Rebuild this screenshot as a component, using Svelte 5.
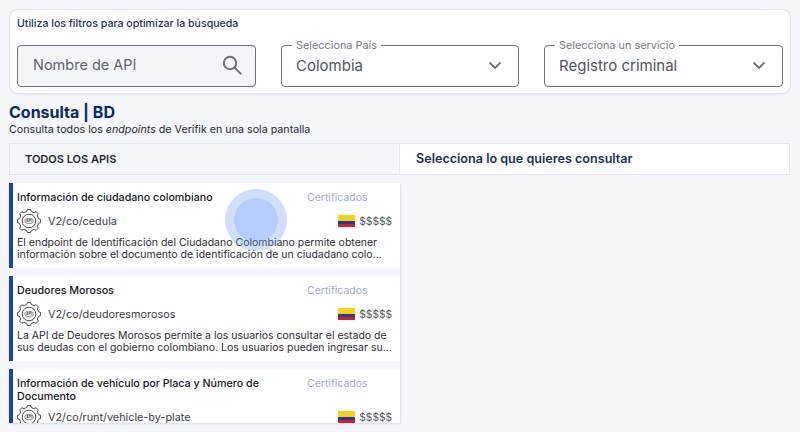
<script lang="ts">
	const apis = [
		{
			title: 'Información de ciudadano colombiano',
			path: 'V2/co/cedula',
			desc: [
				'El endpoint de Identificación del Ciudadano Colombiano permite obtener',
				'información sobre el documento de identificación de un ciudadano colo...'
			]
		},
		{
			title: 'Deudores Morosos',
			path: 'V2/co/deudoresmorosos',
			desc: [
				'La API de Deudores Morosos permite a los usuarios consultar el estado de',
				'sus deudas con el gobierno colombiano. Los usuarios pueden ingresar su...'
			]
		},
		{
			title: 'Información de vehículo por Placa y Número de Documento',
			path: 'V2/co/runt/vehicle-by-plate',
			desc: []
		}
	];

	// 8-tooth gear outline for the API badge
	function gearPath() {
		const pts: string[] = [];
		const teeth = 8;
		for (let i = 0; i < teeth; i++) {
			const a = (i / teeth) * Math.PI * 2 - Math.PI / 2;
			const step = (Math.PI * 2) / teeth;
			const corners = [
				[9.8, a - step * 0.3],
				[11.7, a - step * 0.17],
				[11.7, a + step * 0.17],
				[9.8, a + step * 0.3]
			];
			for (const [r, t] of corners) {
				pts.push((12 + r * Math.cos(t)).toFixed(2) + ' ' + (12 + r * Math.sin(t)).toFixed(2));
			}
		}
		return 'M' + pts.join('L') + 'Z';
	}
	const gear = gearPath();
</script>

<main class="page">
	<section class="filters">
		<p class="filters-title">Utiliza los filtros para optimizar la búsqueda</p>
		<div class="filters-row">
			<div class="search">
				<span>Nombre de API</span>
				<svg width="24" height="24" viewBox="0 0 24 24" fill="none" stroke="#6b6f78" stroke-width="2">
					<circle cx="10" cy="10" r="6.2" />
					<path d="M14.6 14.6 L20.6 20.6" stroke-linecap="round" />
				</svg>
			</div>
			<fieldset class="select">
				<legend>Selecciona País</legend>
				<span>Colombia</span>
				<svg class="chev" width="14" height="9" viewBox="0 0 14 9" fill="none" stroke="#6b6f78" stroke-width="1.8">
					<path d="M1.5 1.5 L7 7 L12.5 1.5" />
				</svg>
			</fieldset>
			<fieldset class="select">
				<legend>Selecciona un servicio</legend>
				<span>Registro criminal</span>
				<svg class="chev" width="14" height="9" viewBox="0 0 14 9" fill="none" stroke="#6b6f78" stroke-width="1.8">
					<path d="M1.5 1.5 L7 7 L12.5 1.5" />
				</svg>
			</fieldset>
		</div>
	</section>

	<h1>Consulta | BD</h1>
	<p class="sub">Consulta todos los <em>endpoints</em> de Verifik en una sola pantalla</p>

	<div class="tabs">
		<div class="tab-left">TODOS LOS APIS</div>
		<div class="tab-right">Selecciona lo que quieres consultar</div>
	</div>

	<div class="list-wrap">
		<div class="list">
			{#each apis as api}
				<article class="card">
					<div class="card-top">
						<h2>{api.title}</h2>
						<span class="cat">Certificados</span>
					</div>
					<div class="card-mid">
						<svg class="api-icon" width="24" height="24" viewBox="0 0 24 24" fill="none" stroke="#33363d" stroke-width="0.9" stroke-linejoin="round">
							<path d={gear} />
							<circle cx="12" cy="12" r="6.8" />
							<rect x="7.8" y="9.7" width="8.4" height="4.6" rx="2.3" stroke-width="0.6" />
							<text x="12" y="13.2" text-anchor="middle" class="api-text">API</text>
						</svg>
						<span class="path">{api.path}</span>
						<span class="flag"><i class="y"></i><i class="b"></i><i class="r"></i></span>
						<span class="price">$$$$$</span>
					</div>
					{#if api.desc.length}
						<div class="desc">
							{#each api.desc as line}
								<p>{line}</p>
							{/each}
						</div>
					{/if}
				</article>
			{/each}
		</div>
		<span class="ripple"><span></span></span>
	</div>
</main>

<style>
	:global(body) {
		margin: 0;
		background: #f5f7fa;
	}

	.page {
		height: 432px;
		overflow: hidden;
		box-sizing: border-box;
		padding: 9px 9px 0;
		font-family: 'Inter', 'Liberation Sans', sans-serif;
		color: #111;
	}

	.filters {
		height: 85px;
		box-sizing: border-box;
		background: #fff;
		border: 1px solid #e0e3e8;
		border-radius: 9px;
		padding: 8px 7px;
		box-shadow: 0 1px 2px rgba(40, 50, 70, 0.06);
	}

	.filters-title {
		margin: 0;
		font-size: 10.6px;
		line-height: 12px;
		font-weight: 500;
		color: #1c2f5e;
	}

	.filters-row {
		display: grid;
		grid-template-columns: 239px 238px 239px;
		gap: 25px;
		margin-top: 15px;
	}

	.search {
		height: 42px;
		box-sizing: border-box;
		display: flex;
		align-items: center;
		justify-content: space-between;
		padding: 0 11px 3px 15px;
		background: #f5f6fa;
		border: 1px solid #6d7079;
		border-radius: 4px;
		font-size: 14.5px;
		color: #5f636c;
	}

	.select {
		height: 47px;
		margin: -5px 0 0;
		box-sizing: border-box;
		padding: 0 15px 0 14px;
		display: flex;
		align-items: center;
		justify-content: space-between;
		border: 1px solid #6d7079;
		border-radius: 4px;
		font-size: 15px;
		color: #50545c;
		min-width: 0;
	}

	.select > span {
		margin-top: -5px;
	}

	.chev {
		margin-top: -5px;
		margin-right: 1px;
	}

	.select legend {
		padding: 0 4px;
		margin-left: -4px;
		font-size: 10.9px;
		line-height: 10px;
		color: #777b84;
	}

	h1 {
		margin: 8px 0 0;
		font-size: 16px;
		line-height: 21px;
		font-weight: 700;
		color: #0c2a6b;
	}

	.sub {
		margin: 0;
		font-size: 10.7px;
		line-height: 13px;
		color: #23262d;
	}

	.tabs {
		display: grid;
		grid-template-columns: 391px 390px;
		height: 32px;
		margin-top: 7px;
		box-sizing: border-box;
		line-height: 30px;
		font-size: 11px;
		font-weight: 600;
	}

	.tab-left {
		border: 1px solid #e3e6ec;
		padding-left: 15px;
		color: #25282f;
	}

	.tab-right {
		border: 1px solid #e3e6ec;
		border-left: 0;
		background: #fff;
		padding-left: 16px;
		font-size: 12.6px;
		color: #1c2f5e;
	}

	.list-wrap {
		position: relative;
		width: 391px;
		margin-top: 8px;
	}

	.list {
		height: 240px;
		overflow: hidden;
		display: flex;
		flex-direction: column;
		gap: 8px;
		box-shadow: 1px 1px 2px rgba(40, 50, 70, 0.14);
	}

	.card {
		flex: none;
		height: 85px;
		box-sizing: border-box;
		background: #fff;
		border-left: 4px solid #1740c8;
		padding: 9px 8px 0 4px;
	}

	.card-top {
		display: flex;
		justify-content: space-between;
		gap: 24px;
		min-height: 14.5px;
	}

	h2 {
		margin: 0;
		font-size: 10.7px;
		line-height: 12.5px;
		font-weight: 500;
		color: #15171c;
	}

	.cat {
		flex: none;
		width: 85px;
		font-size: 10.5px;
		line-height: 12.5px;
		color: #a2adc4;
	}

	.card-mid {
		display: flex;
		align-items: center;
		height: 24px;
		margin-top: 2px;
	}

	.api-icon {
		flex: none;
	}

	.api-text {
		font-size: 3.2px;
		font-weight: 700;
		fill: #3c3f46;
		stroke: none;
	}

	.path {
		margin-left: 7px;
		font-size: 10.85px;
		color: #3a3d44;
	}

	.flag {
		margin-left: auto;
		width: 17px;
		height: 12px;
		display: flex;
		flex-direction: column;
	}

	.flag i {
		display: block;
		flex: 1;
	}

	.flag .y {
		flex: 2;
		background: #f8d21a;
	}

	.flag .b {
		background: #2b3a8c;
	}

	.flag .r {
		background: #cf2030;
	}

	.price {
		margin-left: 4px;
		font-size: 10.2px;
		color: #555962;
	}

	.desc {
		margin-top: 4px;
		font-size: 10.5px;
		line-height: 12.5px;
		color: #2a2d33;
	}

	.desc p {
		margin: 0;
		white-space: nowrap;
	}

	.ripple {
		position: absolute;
		left: 216px;
		top: 6px;
		width: 62px;
		height: 62px;
		border-radius: 50%;
		background: rgba(100, 150, 245, 0.3);
		display: flex;
		align-items: center;
		justify-content: center;
	}

	.ripple span {
		width: 44px;
		height: 44px;
		border-radius: 50%;
		background: rgba(100, 150, 245, 0.25);
	}
</style>
